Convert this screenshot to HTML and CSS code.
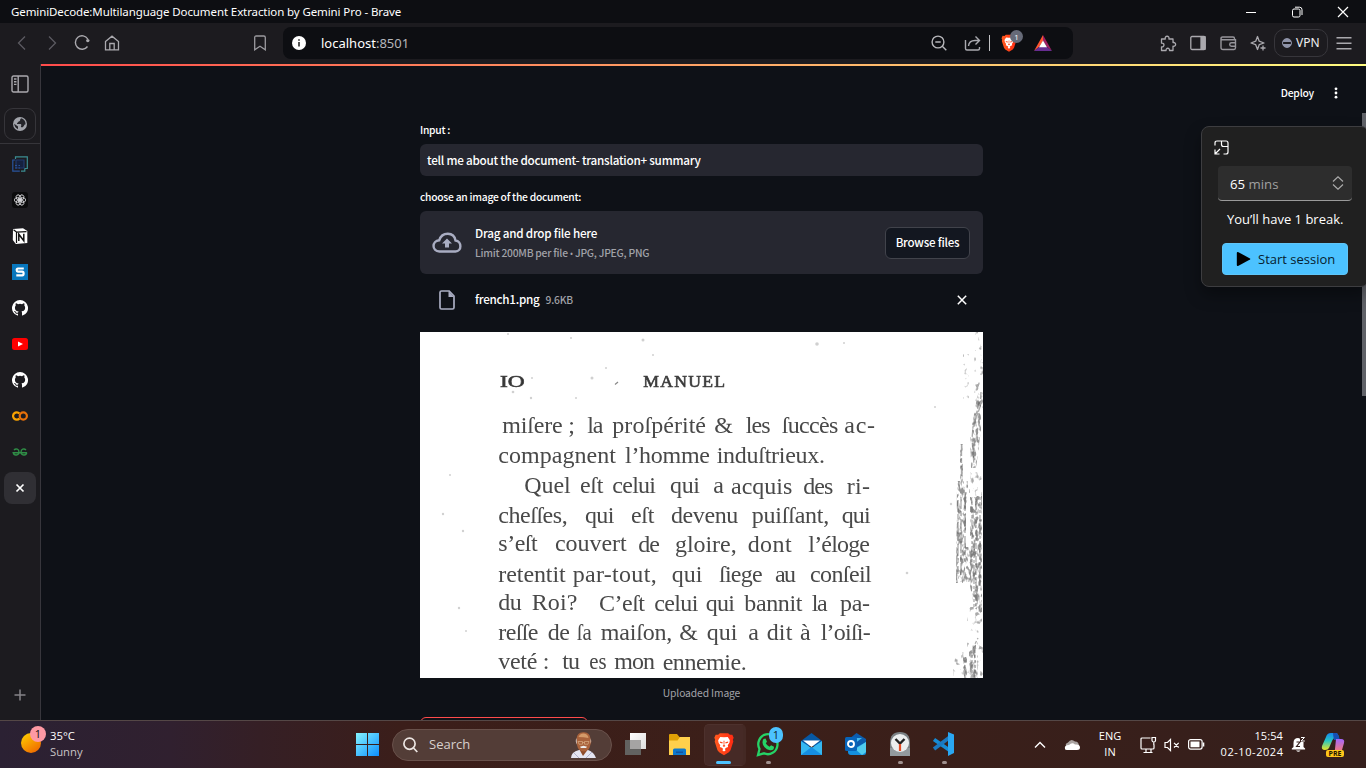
FILE: index.html
```html
<!DOCTYPE html>
<html lang="en">
<head>
<meta charset="utf-8">
<title>GeminiDecode:Multilanguage Document Extraction by Gemini Pro</title>
<link rel="stylesheet" href="styles.css">
</head>
<body>
<svg width="0" height="0" class="defs">
  <defs>
    <linearGradient id="brave" x1="0" x2="1"><stop offset="0" stop-color="#ff5a1f"/><stop offset="1" stop-color="#ff2a12"/></linearGradient>
    <symbol id="lion" viewBox="0 0 24 28">
      <path fill="url(#brave)" d="M7 1h10l2 2 3-.2 1.600 3.700-1 2.500.6 2-3.400 10.500-2 2.500L12 27.500 6.200 24l-2-2.500L.8 11l.6-2-1-2.500L2 2.800 5 3z"/>
      <path fill="#fff" d="M7.500 5.500L12 6l4.500-.5 2.500 4-.5 3-2 3 .5 2-2.500 1-1.500 1.500 1 1.500-2 1.500-2-1.500 1-1.500-1.500-1.500-2.500-1 .5-2-2-3-.5-3z"/>
      <path fill="#ff4a1c" d="M7 11l3.500 1-.5 1.300L7 12.500zM17 11l-3.500 1 .5 1.300 3-.8zM11.400 10h1.200l-.2 5 1.300 1.300L12 17.500l-1.700-1.200 1.300-1.300z"/>
    </symbol>
    <symbol id="github" viewBox="0 0 16 16"><path fill="#fff" d="M8 0a8 8 0 0 0-2.530 15.590c.4.070.55-.17.550-.38v-1.490c-2.010.37-2.530-.49-2.690-.94-.09-.23-.48-.94-.82-1.130-.28-.15-.68-.52-.01-.53.630-.01 1.080.58 1.230.82.720 1.210 1.870.87 2.330.66.070-.52.280-.87.510-1.070-1.780-.2-3.640-.89-3.640-3.950 0-.87.310-1.590.82-2.150-.08-.2-.36-1.020.08-2.120 0 0 .67-.21 2.200.82a7.600 7.600 0 0 1 4 0c1.530-1.040 2.200-.82 2.200-.82.440 1.100.160 1.920.080 2.120.510.560.820 1.270.820 2.150 0 3.070-1.870 3.750-3.650 3.950.290.250.540.730.540 1.480v2.200c0 .21.150.460.550.380A8 8 0 0 0 8 0z"/></symbol>
  </defs>
</svg>
<div class="desktop">
  <header class="titlebar">
    <span class="win-title">GeminiDecode:Multilanguage Document Extraction by Gemini Pro - Brave</span>
    <div class="win-controls">
      <svg width="12" height="12" viewBox="0 0 12 12"><path d="M1 6.500h10" stroke="#fff"/></svg>
      <svg width="12" height="12" viewBox="0 0 12 12" fill="none" stroke="#fff"><rect x="1.500" y="3" width="7.500" height="8" rx="1.500"/><path d="M4 1.200h4.500a2.500 2.500 0 0 1 2.500 2.500V9"/></svg>
      <svg width="12" height="12" viewBox="0 0 12 12"><path d="M1 1l10 10M11 1L1 11" stroke="#fff" stroke-width="1.200"/></svg>
    </div>
  </header>

  <nav class="toolbar">
    <div class="nav-icons">
      <svg width="16" height="16" fill="none" stroke="#5c5b61" stroke-width="1.300"><path d="M11 1.500L4.500 8l6.500 6.500"/></svg>
      <svg width="16" height="16" fill="none" stroke="#5c5b61" stroke-width="1.300"><path d="M5 1.500L11.500 8 5 14.500"/></svg>
      <svg width="16" height="16" fill="none" stroke="#aaa9ae" stroke-width="1.400"><path d="M13.500 11.500A6.700 6.700 0 1 1 13.800 4"/><circle cx="13.800" cy="5.600" r="1.700" fill="#aaa9ae" stroke="none"/></svg>
      <svg width="16" height="16" fill="none" stroke="#aaa9ae" stroke-width="1.300"><path d="M1.500 6.500L8 1.200l6.500 5.300v8.300h-13zM5.800 14.500V8.500h4.400v6"/></svg>
    </div>
    <svg class="bookmark" width="14" height="16" fill="none" stroke="#9b9a9f" stroke-width="1.300"><path d="M1.700 2.500q0-1.500 1.500-1.500h7.600q1.500 0 1.500 1.500v12.300L7 11.200l-5.300 3.600z"/></svg>
    <div class="address">
      <svg width="14" height="14" viewBox="0 0 14 14"><circle cx="7" cy="7" r="7" fill="#fff"/><path d="M7 6v4.500M7 3.200v1.600" stroke="#333" stroke-width="1.700"/></svg>
      <span class="url">localhost<span>:8501</span></span>
      <div class="addr-icons">
        <svg width="16" height="16" fill="none" stroke="#b7b7bb" stroke-width="1.400"><circle cx="7" cy="7" r="5.900"/><path d="M4.300 7h5.400M11.300 11.300l4 4"/></svg>
        <svg class="share" width="18" height="16" fill="none" stroke="#aaaab0" stroke-width="1.400"><path d="M1.500 5v8.500q0 1.500 1.500 1.500h11q1.500 0 1.500-1.500V12M4.500 11q.5-5.500 6.500-5.500h4M11.500 1.500l4 4-4 4"/></svg>
        <i class="sep"></i>
        <span class="shield"><svg width="16" height="18"><use href="#lion"/></svg><b>1</b></span>
        <svg class="bat" width="18" height="16" viewBox="0 0 18 16"><path fill="#ff5530" d="M9 0v6l-4 6-5 4z"/><path fill="#9e1f63" d="M9 0l9 16-5-4-4-6z"/><path fill="#662d91" d="M0 16l5-4h8l5 4z"/><path fill="#fff" d="M9 5.500l4 6.800H5z"/></svg>
      </div>
    </div>
    <div class="ext-icons">
      <svg width="17" height="17" fill="none" stroke="#aaa9ae" stroke-width="1.300" stroke-linejoin="round"><path d="M1.500 4h3.800c-1-3.700 4.600-3.700 3.600 0H13v3.600c3.500-.8 3.500 4.400 0 3.600V15.500H9.500c.6-3-4-3-3.400 0H1.500v-3.700c3.300.6 3.300-4.200 0-3.600z"/></svg>
      <svg width="16" height="16" fill="none" stroke="#aaa9ae" stroke-width="1.300"><rect x=".8" y="1.500" width="14.400" height="13" rx="1.200"/><path fill="#aaa9ae" d="M11 2h4v12h-4z"/></svg>
      <svg width="17" height="16" fill="none" stroke="#96959b" stroke-width="1.400"><path d="M14.500 4.500v-1Q14.500 2 13 2H2.500Q1 2 1 3.300T2.500 4.800h13v8q0 1.700-1.500 1.700H3q-2 0-2-2V3M15.500 7.700h-4q-1.800 0-1.800 1.700t1.800 1.800h4"/></svg>
      <svg width="17" height="17" fill="none" stroke="#aaa9ae" stroke-width="1.300" stroke-linejoin="round"><path d="M7.500 1.500l1.700 4.700L14 8l-4.800 1.700-1.700 4.800-1.800-4.800L1 8l4.700-1.800zM13 10.500v5M10.500 13h5"/></svg>
    </div>
    <div class="vpn"><i></i>VPN</div>
    <svg class="menu" width="16" height="14" stroke="#aaa9ae" stroke-width="1.400"><path d="M.5 1.800h15M.5 7.300h15M.5 12.800h15"/></svg>
  </nav>

  <div class="browser-body">
    <aside class="sidebar">
      <div class="cell first"><svg width="18" height="18" fill="none" stroke="#aaa9ae" stroke-width="1.400"><rect x="1" y="1" width="16" height="16" rx="1.500"/><path d="M7.200 1v16M3 4h2.500M3 6.700h2.500M3 9.400h2.500"/></svg></div>
      <div class="globe"><svg width="14" height="14" viewBox="0 0 14 14"><circle cx="7" cy="7" r="7" fill="#a2a4ab"/><path fill="#25252a" d="M8.500 1.200C6 2.200 8.500 3.700 5.600 4.500 5 5.700 3.800 5.800 4 7h3.700c1.500 1 0 2 .2 3 1.500 1 3-.6 3.500-2.300l1.200-.5C12.500 4 11.200 2.200 8.500 1.200zM1.200 6.800L5 9.400v2.800C3 11.300 1.300 9.500 1.200 6.800z"/></svg></div>
      <div class="side-list">
        <div class="cell"><svg width="16" height="16" fill="none" stroke-width="1.200"><path stroke="#3b8d92" d="M3.500 3V.8h11.800v11.700h-2.500v2.700H9"/><path stroke="#29549d" d="M3 4H.8v11.200h7"/><path fill="#15213f" stroke="#21396c" d="M4 4h8v8H4z"/><path stroke="#285299" stroke-dasharray="2 1.500" d="M3 9.500h5M3 12h5"/></svg></div>
        <div class="cell"><svg width="16" height="16"><rect width="16" height="16" rx="3" fill="#0b0b0c"/><g fill="none" stroke="#d9d9dc" stroke-width=".85"><ellipse cx="8" cy="5.600" rx="2.300" ry="3.300" transform="rotate(30 8 8)"/><ellipse cx="8" cy="5.600" rx="2.300" ry="3.300" transform="rotate(90 8 8)"/><ellipse cx="8" cy="5.600" rx="2.300" ry="3.300" transform="rotate(150 8 8)"/><ellipse cx="8" cy="5.600" rx="2.300" ry="3.300" transform="rotate(210 8 8)"/><ellipse cx="8" cy="5.600" rx="2.300" ry="3.300" transform="rotate(270 8 8)"/><ellipse cx="8" cy="5.600" rx="2.300" ry="3.300" transform="rotate(330 8 8)"/></g></svg></div>
        <div class="cell"><svg width="16" height="16"><path fill="#fff" d="M1 1l10-.8L15.300 3v12l-11.500.9L.8 12z"/><path fill="none" stroke="#111" stroke-width="1.200" d="M1.500 1.800l3 2.300v11M4.500 4.200l10-.6"/><path fill="none" stroke="#111" stroke-width="1.500" d="M6.800 13V6.200l5 6.600V5.800"/></svg></div>
        <div class="cell"><svg width="16" height="16"><path fill="#0877bd" d="M0 0h16v16H0z"/><path fill="none" stroke="#fff" stroke-width="2.200" d="M11.800 4.500H6Q4.700 4.500 4.700 6T6 7.700h4.200q1.400 0 1.400 1.800t-1.400 1.900H4.300"/></svg></div>
        <div class="cell"><svg width="16" height="16"><use href="#github"/></svg></div>
        <div class="cell"><svg width="16" height="12"><rect width="16" height="12" rx="2.500" fill="#f00"/><path fill="#fff" d="M6 3.500l5 2.500-5 2.500z"/></svg></div>
        <div class="cell"><svg width="16" height="16"><use href="#github"/></svg></div>
        <div class="cell"><svg width="16" height="10" fill="none" stroke-width="2.200"><path stroke="#f9a300" d="M7.500 2.500a3.700 3.700 0 1 0 0 5"/><circle cx="11.300" cy="5" r="3.600" stroke="#e8710a"/></svg></div>
        <div class="cell"><svg width="16" height="9" fill="none" stroke="#2f8d46" stroke-width="1.400"><path d="M2 2c2-2 5-.8 5 2.200s-5 4.300-5.800.5H15M14 2c-2-2-5-.8-5 2.200s5 4.300 5.800.5"/></svg></div>
        <div class="cell"><div class="close-tab"><svg width="10" height="10"><path d="M1.500 1.500l7 7M8.500 1.500l-7 7" stroke="#fff" stroke-width="1.700"/></svg></div></div>
      </div>
      <div class="cell add"><svg width="12" height="12"><path d="M6 .5v11M.5 6h11" stroke="#858489" stroke-width="1.500"/></svg></div>
    </aside>

    <main class="app">
      <div class="rainbow"></div>
      <div class="app-header"><span>Deploy</span><svg width="4" height="12" fill="#fff"><circle cx="2" cy="1.800" r="1.400"/><circle cx="2" cy="6" r="1.400"/><circle cx="2" cy="10.200" r="1.400"/></svg></div>
      <div class="content">
        <div class="label l1">Input :</div>
        <div class="input"><span>tell me about the document- translation+ summary</span></div>
        <div class="label l2">choose an image of the document:</div>
        <div class="dropzone">
          <svg width="30" height="22" viewBox="0 0 30 22"><path fill="none" stroke="#a9adc2" stroke-width="2.400" d="M7.500 19.500C-.5 19-.3 9 7.200 8.300 10-.5 22-.5 23.500 8.500c6.500.5 6.500 11 0 11z"/><path fill="#a9adc2" d="M15 6.500l5 5h-3v4h-4v-4h-3z"/></svg>
          <div class="drop-text"><div class="drop-title">Drag and drop file here</div><div class="drop-sub">Limit 200MB per file <span class="dot">•</span> JPG, JPEG, PNG</div></div>
          <div class="browse"><span>Browse files</span></div>
        </div>
        <div class="file-row">
          <svg width="16" height="20" viewBox="0 0 16 20"><path fill="none" stroke="#a9adc2" stroke-width="1.700" d="M2.500 1h7.700l4.800 5v11.500q0 1.500-1.500 1.500h-11Q1 19 1 17.500v-15Q1 1 2.500 1z"/><path fill="#a9adc2" d="M9.500 1v6H15z"/></svg>
          <span class="fname">french1.png</span><span class="fsize">9.6KB</span>
          <svg class="remove" width="10" height="10"><path d="M.8.8l8.400 8.400M9.200.8L.8 9.200" stroke="#fff" stroke-width="1.500"/></svg>
        </div>
        <svg class="scan" width="563" height="346" viewBox="0 0 563 346">
          <defs>
            <filter id="ink" x="0" y="0" width="563" height="346" filterUnits="userSpaceOnUse">
              <feTurbulence type="fractalNoise" baseFrequency=".34 .16" numOctaves="2" seed="5" result="n"/>
              <feColorMatrix in="n" values="0 0 0 0 .3  0 0 0 0 .3  0 0 0 0 .3  5 0 0 0 -2.200" result="m"/>
              <feComposite in="m" in2="SourceGraphic" operator="in"/>
              <feGaussianBlur stdDeviation=".45"/>
            </filter>
            <filter id="sparse" x="0" y="0" width="563" height="346" filterUnits="userSpaceOnUse">
              <feTurbulence type="fractalNoise" baseFrequency=".2 .16" numOctaves="2" seed="9" result="n"/>
              <feColorMatrix in="n" values="0 0 0 0 .4  0 0 0 0 .4  0 0 0 0 .4  6 0 0 0 -3.500" result="m"/>
              <feComposite in="m" in2="SourceGraphic" operator="in"/>
              <feGaussianBlur stdDeviation=".5"/>
            </filter>
            <filter id="soft"><feGaussianBlur stdDeviation="2.100"/></filter>
          </defs>
          <rect width="563" height="346" fill="#fff"/>
          <g class="print" transform="translate(60 0) scale(.33333)" filter="url(#soft)">
            <g class="head"><text x="60" y="165" textLength="74" lengthAdjust="spacingAndGlyphs">IO</text><text x="490" y="165" textLength="245">MANUEL</text></g>
            <text x="67" y="302" textLength="218">miſere ;</text><text x="322" y="302" textLength="48">la</text><text x="397" y="302" textLength="281">proſpérité</text><text x="703" y="302" textLength="59">&amp;</text><text x="797" y="302" textLength="75">les</text><text x="905" y="302" textLength="170">ſuccès</text><text x="1093" y="302" textLength="92">ac-</text>
            <text x="55" y="392" textLength="353">compagnent</text><text x="435" y="392" textLength="255">l’homme</text><text x="710" y="394" textLength="325">induſtrieux.</text>
            <text x="133" y="482" textLength="139">Quel</text><text x="300" y="482" textLength="70">eſt</text><text x="397" y="482" textLength="131">celui</text><text x="570" y="484" textLength="90">qui</text><text x="700" y="484" textLength="30">a</text><text x="753" y="485" textLength="184">acquis</text><text x="970" y="485" textLength="90">des</text><text x="1100" y="485" textLength="70">ri-</text>
            <text x="55" y="572" textLength="208">cheſſes,</text><text x="315" y="572" textLength="88">qui</text><text x="453" y="572" textLength="70">eſt</text><text x="573" y="572" textLength="202">devenu</text><text x="815" y="573" textLength="233">puiſſant,</text><text x="1085" y="573" textLength="87">qui</text>
            <text x="55" y="657" textLength="118">s’eſt</text><text x="225" y="658" textLength="215">couvert</text><text x="475" y="659" textLength="65">de</text><text x="585" y="659" textLength="185">gloire,</text><text x="803" y="659" textLength="132">dont</text><text x="985" y="659" textLength="185">l’éloge</text>
            <text x="55" y="750" textLength="202">retentit</text><text x="278" y="750" textLength="252">par-tout,</text><text x="575" y="750" textLength="92">qui</text><text x="717" y="750" textLength="131">ſiege</text><text x="885" y="750" textLength="63">au</text><text x="990" y="750" textLength="185">conſeil</text>
            <text x="55" y="835" textLength="70">du</text><text x="155" y="835" textLength="137">Roi?</text><text x="357" y="836" textLength="138">C’eſt</text><text x="523" y="836" textLength="132">celui</text><text x="677" y="836" textLength="88">qui</text><text x="793" y="837" textLength="174">bannit</text><text x="995" y="837" textLength="48">la</text><text x="1080" y="837" textLength="90">pa-</text>
            <text x="55" y="923" textLength="120">reſſe</text><text x="203" y="923" textLength="67">de</text><text x="290" y="923" textLength="45" lengthAdjust="spacingAndGlyphs">ſa</text><text x="362" y="924" textLength="215">maiſon,</text><text x="598" y="924" textLength="57">&amp;</text><text x="680" y="925" textLength="92">qui</text><text x="805" y="925" textLength="30">a</text><text x="860" y="925" textLength="77">dit</text><text x="960" y="925" textLength="30">à</text><text x="1022" y="925" textLength="150">l’oiſi-</text>
            <text x="55" y="1011" textLength="153">veté :</text><text x="247" y="1012" textLength="53">tu</text><text x="328" y="1012" textLength="52" lengthAdjust="spacingAndGlyphs">es</text><text x="403" y="1012" textLength="122">mon</text><text x="548" y="1013" textLength="252">ennemie.</text>
          </g>
          <g fill="#999" opacity=".45"><circle cx="223" cy="8" r="1.500"/><circle cx="397" cy="12" r="1.800"/><circle cx="88" cy="2" r="1"/><circle cx="151" cy="6" r="1"/><circle cx="233" cy="23" r="1"/><circle cx="172" cy="46" r="1.500"/><circle cx="186" cy="36" r="1"/><circle cx="112" cy="46" r="1"/><circle cx="111" cy="66" r="1.200"/><circle cx="156" cy="66" r="1"/><circle cx="93" cy="60" r="1.300"/><circle cx="30" cy="143" r="1"/><circle cx="23" cy="182" r="1.200"/><circle cx="43" cy="199" r="1.200"/><circle cx="39" cy="276" r="1.200"/><circle cx="46" cy="299" r="1"/><circle cx="487" cy="241" r="1.300"/><circle cx="515" cy="75" r="1"/><circle cx="531" cy="172" r="1.200"/><circle cx="424" cy="11" r="1"/></g>
          <path d="M195 52.500l3-2.500" stroke="#888" stroke-width="1.200"/>
          <g filter="url(#ink)">
            <path d="M558 60h3v38l-5 38h-5l-1-32z"/>
            <path d="M540 112h3v37h-3zM537 149h11v22h-9v80h-3zM539 165h7v86h-7zM550 165h12v115l-6 4-6-30zM556 164h6v110h-6zM545 215h5v35h-5z"/>
            <path d="M549 320l9-10v36h-8zM543 325h4v21h-4z"/>
          </g>
          <g fill="none" stroke="#555" opacity=".5" stroke-width="1.300">
            <path stroke-dasharray="7 2 3 1" d="M561 60l-1 15-7 20-1 12 2 26M559 70l-5 25"/>
            <path stroke-dasharray="12 2 5 3" d="M541.500 112v32M541 165v80M545 160v70M538 168v74"/>
            <path stroke-dasharray="3 2 6 2" d="M552 170v60M556 167v110M560 165v90M554 215v60"/>
            <path stroke-dasharray="3 2" d="M552 346v-28l6-12M545 346v-18M555 346v-30"/>
          </g>
          <path filter="url(#sparse)" d="M555 0h8v90h-10zM543 22h6v50h-6zM549 140h13v25h-13zM547 275h15v40h-15zM533 320h20v26h-20zM555 295h8v51h-8z"/>
        </svg>
        <div class="caption"><span>Uploaded Image</span></div>
        <div class="submit"></div>
      </div>
      <div class="scroll-thumb"></div>
    </main>
  </div>

  <footer class="taskbar">
    <div class="weather">
      <div class="sun"><b>1</b></div>
      <div class="w-text"><div>35°C</div><div>Sunny</div></div>
    </div>
    <svg class="start" width="24" height="24" viewBox="0 0 24 24"><defs><linearGradient id="w" x2="1" y2="1"><stop stop-color="#85f4ff"/><stop offset="1" stop-color="#0c8eff"/></linearGradient></defs><path fill="url(#w)" d="M1 0h11v11H1zM13 0h11v11H13zM1 12h11v11H1zM13 12h11v11H13z"/></svg>
    <div class="search">
      <svg width="15" height="16" fill="none" stroke="#ece5e2" stroke-width="1.700"><circle cx="6.500" cy="6.700" r="5.600"/><path d="M10.500 11l3.800 4"/></svg>
      <span>Search</span>
      <svg class="portrait" width="28" height="26" viewBox="0 0 28 26"><path fill="#e4e5f1" d="M1 26q0-6 8-8h9q6 2 8 8z"/><path fill="#8d4c2a" d="M8 15l5 9 6-8z"/><path fill="#a9623b" d="M6.500 7Q7 0 13.500.3 20 0 20.500 7l.8 3-1 3q-1 6-6.500 6.500Q8 19 7 13l-1-3z"/><path fill="#d49a69" d="M8.500 5Q10 1 14 1.500q4 .5 4.500 4.500-5-1-10-1z"/><path fill="none" stroke="#e0b88f" stroke-width=".6" d="M8 9.500h4.500v2.700H9zM14.500 9.500H19L18 12.200h-3.500zM12.500 10.500h2"/><path fill="#eee" d="M10 14.800l3.500-1 3.500 1-1 1.100h-5z"/><path fill="#d5cbc7" d="M6.500 6Q4.800 9 7 12.500zM20.500 6q1.500 3 0 6z"/><path stroke="#afb1cc" d="M4 21l5 5M22 20l-6 6" fill="none"/></svg>
    </div>
    <div class="apps">
      <div><svg width="24" height="24"><defs><linearGradient id="tv" x2="1" y2="1"><stop stop-color="#fff"/><stop offset="1" stop-color="#ddd"/></linearGradient></defs><path fill="#626260" d="M1 8h16v15H1z"/><path fill="url(#tv)" d="M6 1h16v16H6z"/><path fill="#a5a4a3" d="M6 8h11v9H6z"/></svg></div>
      <div><svg width="24" height="24"><path fill="#dfa006" d="M1 3q0-1 1-1h7l2.500 3H20v6H1z"/><path fill="#ffd04c" d="M1 8.500h8.500L12 5h10v18H1z"/><path fill="#0d78cc" d="M5 23v-5q0-1.500 1.500-1.500h10Q18 16.500 18 18v5z"/><path fill="#1252a0" d="M8 19.500h7V21H8z"/></svg></div>
      <div class="active"><svg width="20" height="24"><use href="#lion"/></svg><i class="run on"></i></div>
      <div class="wa"><svg width="24" height="26" fill="none" stroke="#25d366"><path stroke-width="2.300" d="M2 24l1.500-6A9.600 10 0 1 1 8 22.300z"/><path fill="#25d366" stroke="none" d="M7.500 8l2-.5 1.500 3.200-1.200 1.600q1.200 2.500 3.700 3.500l1.600-1.600 2.900 1.600q.2 4-4 3.500Q7 17.500 6.500 11.500q0-2.500 1-3.500z"/></svg><b>1</b><i class="run"></i></div>
      <div><svg width="24" height="24"><path fill="#0758a4" d="M1 9L11.500 1 22 9v5H1z"/><path fill="#35b8f1" d="M1 9l10.500 7L22 9v14H1z"/><path fill="#168ee2" d="M22 23H1l10.500-8z"/><path fill="#fff" d="M3 8.500h17L11.500 15z"/></svg></div>
      <div><svg width="24" height="26"><path fill="#0b5cad" d="M5 8l7.500-6L22 8v10H5z"/><path fill="#42b9ee" d="M10 7h8l-8 6z"/><path fill="#1490df" d="M4 12l7 5 11-6v11q0 2-2 2H7q-3 0-3-3z"/><path fill="#50ccef" d="M11 18l11-7v10l-4 3z"/><rect y="6" x="1" width="12" height="14" rx="1.500" fill="#0764ba"/><circle cx="7" cy="13" r="3" fill="none" stroke="#fff" stroke-width="1.900"/></svg></div>
      <div><svg width="24" height="26"><path fill="#7a8084" d="M2 24V12Q2 1 12 1t10 11v12z"/><path fill="#939a9e" d="M2 17h20v8H2z"/><circle cx="12" cy="12" r="9" fill="#eceeef"/><path d="M7.500 8l4.500 4.500L16.500 8" fill="none" stroke="#222" stroke-width="2.400"/><path d="M12 13v7" stroke="#e34d26" stroke-width="2.200"/></svg><i class="run"></i></div>
      <div><svg width="24" height="26"><path fill="none" stroke="#168bd5" stroke-width="3.800" d="M18 19.500L2 8.500"/><path fill="none" stroke="#1b79c1" stroke-width="3.800" d="M18 6L2 18"/><path fill="#2aa7f2" d="M16 1l6 2.500v18.500L16 25z"/></svg><i class="run"></i></div>
    </div>
    <div class="tray">
      <svg class="chev" width="12" height="8" fill="none" stroke="#fff" stroke-width="1.400"><path d="M1 6.500l5-5 5 5"/></svg>
      <svg class="cloud" width="17" height="12"><path fill="#aaa3a1" d="M3 8Q0 5 4 3.500 7-1 11 2.500q4 0 4 5z"/><path fill="#fff" d="M1 10Q0 6 5 6q3-3 6-.5 5-.5 5 3 0 2.500-3 2.500H3q-2 0-2-1z"/></svg>
      <div class="lang">ENG<br>IN</div>
      <svg class="net" width="17" height="18" fill="none" stroke="#fff" stroke-width="1.200"><path d="M10.500 2H2Q1 2 1 3v9q0 1 1 1h11q1 0 1-1V8.500M6 13v3M11 13v3M3.500 16.500h9M12 1.500h3.500v3q0 1.500-1.700 1.500T12 4.500zM13.800 6v3"/></svg>
      <svg class="mute" width="17" height="14" fill="none" stroke="#fff" stroke-width="1.200"><path d="M1 4.500h2.500L6.500 1.500v11L3.500 9.500H1zM10 4.800l4.700 4.700M14.700 4.800L10 9.500"/></svg>
      <svg class="batt" width="17" height="11"><rect x=".6" y=".6" width="13.500" height="9.500" rx="2" fill="none" stroke="#fff" stroke-width="1.200"/><path fill="#fff" d="M2.500 2.500h9v5.700h-9zM14.800 3.500h1.500v4h-1.500z"/></svg>
      <div class="clock">15:54<br><span>02-10-2024</span></div>
      <svg class="bell" width="15" height="17"><path fill="#fff" d="M2.500 11V7q0-5 4.700-5l5.300 2v7l1.600 1.500v1H.8v-1zM5 14.500h4.500q-2 2.500-4.500 0z"/><path fill="none" stroke="#321e1c" stroke-width="1.100" d="M5.500 6H9l-3.500 4.500H9"/><path fill="#351f1c" d="M9 0h6v6H9z"/><path fill="none" stroke="#fff" d="M10 1.500h3.500L10 5h3.800"/></svg>
      <div class="copilot"><svg width="25" height="24" viewBox="0 0 25 24"><defs><linearGradient id="c1" x2="0" y2="1"><stop stop-color="#1687ed"/><stop offset=".45" stop-color="#25c4c5"/><stop offset="1" stop-color="#e9e325"/></linearGradient><linearGradient id="c2" x2="0" y2="1"><stop stop-color="#a466ff"/><stop offset="1" stop-color="#ff7d67"/></linearGradient></defs><path fill="url(#c1)" d="M5 4q1-4 5-4h5q2 0 3 5h-4q-2 0-3 3l-3 7q-1 2-4 2-4 0-3-4z"/><path fill="#164fb4" d="M12 0h3q2 0 3 4l1 3h-6q-1-5-1-7z"/><path fill="url(#c2)" d="M15 6h5q4 0 3 4l-2 7q-1 3-5 3h-5q3-1 3-4z"/></svg><b>PRE</b></div>
    </div>
  </footer>

  <div class="focus">
    <svg class="expand" width="15" height="15" fill="none" stroke="#fff" stroke-width="1.200"><path d="M1 5.500V3q0-2 2-2h9q2 0 2 2v9q0 2-2 2H9.500M7.500 1v3.500q0 2 2 2H14M1 9.500V14h4.500M1.500 13.500L6 9"/></svg>
    <div class="mins"><span>65 <em>mins</em></span><svg width="12" height="14" fill="none" stroke="#aaa" stroke-width="1.200"><path d="M1 5.500L6 .8l5 4.700M1 8.500l5 4.700 5-4.700"/></svg></div>
    <div class="break">You’ll have 1 break.</div>
    <div class="session"><svg width="15" height="16"><path fill="#000" d="M.8 2Q.8.500 2.500 1.200L14 7.500q.6.500 0 1L2.500 14.800Q.8 15.500.8 14z"/></svg><span>Start session</span></div>
  </div>
</div>
</body>
</html>
```
FILE: styles.css
```css
* { box-sizing: border-box; }
body { margin: 0; background: #0e1117; font-family: "Open Sans", "Noto Sans", sans-serif; color: #fff; overflow: hidden; }
svg { display: block; flex: none; }
.defs { position: absolute; }
i, em { font-style: normal; }
.desktop { position: relative; width: 1366px; height: 768px; display: flex; flex-direction: column; overflow: hidden; }

.titlebar { height: 23px; background: #0d0e12; display: flex; justify-content: space-between; align-items: center; padding: 0 17px 0 11px; flex: none; }
.win-title { font: 11.5px/22px "Noto Sans", sans-serif; letter-spacing: -.1px; white-space: nowrap; }
.win-controls { display: flex; gap: 34px; }

.toolbar { height: 41px; padding-bottom: 1px; background: #1c1b1f; display: flex; align-items: center; flex: none; }
.nav-icons { display: grid; grid-template-columns: repeat(4, 30px); justify-items: center; margin-left: 7px; }
.bookmark { margin: 0 16px 0 126px; }
.address { width: 790px; height: 32px; border-radius: 8px; background: #0d0e12; display: flex; align-items: center; padding-left: 9px; }
.url { margin-left: 15px; font: 13px/20px "Noto Sans", sans-serif; letter-spacing: 0; }
.url span { color: #b6b6bb; }
.addr-icons { margin-left: auto; display: flex; align-items: center; }
.share { margin-left: 17px; }
.sep { width: 1px; height: 16px; background: #c2c2c5; margin-left: 7px; }
.shield { position: relative; width: 22px; margin-left: 11px; }
.shield b { position: absolute; left: 9px; top: -4px; width: 13px; height: 13px; border-radius: 7px; background: #666a78; font: 8px/13px "Open Sans", sans-serif; text-align: center; }
.bat { margin: 0 21px 0 11px; }
.ext-icons { display: grid; grid-template-columns: repeat(4, 30px); justify-items: center; align-items: center; margin-left: 80px; }
.vpn { margin-left: 1px; width: 54px; height: 28px; border: 1px solid #37363b; border-radius: 10px; display: flex; align-items: center; font: 12px/20px "Noto Sans", sans-serif; padding: 0 0 1px 7px; gap: 4px; color: #efeff1; }
.vpn i { width: 10px; height: 10px; border-radius: 5px; background: linear-gradient(#8e93a8 3px, #1c1b1f 3px, #1c1b1f 5px, #8e93a8 5px); border: 1px solid #8e93a8; margin-top: 1px; }
.menu { margin-left: 8px; }

.browser-body { flex: 1; display: flex; min-height: 0; }
.sidebar { width: 41px; background: #1c1b1f; border-right: 1px solid #37363c; display: flex; flex-direction: column; flex: none; }
.cell { height: 36px; display: flex; align-items: center; justify-content: center; }
.cell.first { height: 40px; }
.globe { width: 32px; height: 32px; margin: 4px 4px 3px; border: 1px solid #36353a; border-radius: 9px; display: flex; align-items: center; justify-content: center; }
.side-list { border-top: 1px solid #36353a; padding-top: 2px; }
.close-tab { width: 32px; height: 32px; border-radius: 8px; background: #302f34; display: flex; align-items: center; justify-content: center; }
.add { margin-top: auto; height: 50px; }

.app { flex: 1; position: relative; background: #0e1117; display: flex; flex-direction: column; overflow: hidden; font-family: "Noto Sans CJK SC", "Noto Sans CJK JP", sans-serif; }
.rainbow { height: 2px; background: linear-gradient(90deg, #ff4b4b, #fffd80); flex: none; }
.app-header { height: 54px; flex: none; display: flex; justify-content: flex-end; align-items: center; gap: 20px; padding-right: 28px; font-size: 10.3px; font-weight: 500; }
.app-header span { letter-spacing: -.2px; margin-top: -2px; }
.content { width: 563px; margin-left: 379px; }
.label { font-size: 10.3px; font-weight: 500; line-height: 16px; white-space: nowrap; letter-spacing: -.25px; }
.l1 { margin-top: 2px; }
.l2 { margin-top: 13px; }
.input { margin-top: 6px; height: 32px; border-radius: 6px; background: #262730; padding-left: 7px; font-size: 11.7px; line-height: 31px; font-weight: 500; white-space: nowrap; letter-spacing: -.24px; }
.dropzone { margin-top: 6px; height: 63px; border-radius: 6px; background: #262730; display: flex; align-items: center; padding: 0 13px 0 12px; }
.drop-text { margin-left: 13px; font-weight: 500; white-space: nowrap; }
.drop-title { font-size: 11.7px; line-height: 19px; letter-spacing: -.22px; }
.drop-sub { font-size: 10.3px; line-height: 19px; letter-spacing: -.23px; color: #a1a2a8; padding-top: 1px; margin-bottom: -1px; }
.dot { font-family: "Noto Sans", sans-serif; font-size: 8px; letter-spacing: 0; }
.browse { margin-left: auto; width: 85px; height: 32px; border: 1px solid #41434b; border-radius: 6px; background: #131720; text-align: center; font-size: 11.6px; line-height: 29px; font-weight: 500; white-space: nowrap; letter-spacing: -.25px; }
.file-row { height: 52px; margin-top: 0; margin-bottom: 6px; display: flex; align-items: center; padding: 0 16px 0 19px; font-weight: 500; }
.fname { margin: -3px 0 0 20px; font-size: 11.7px; line-height: 20px; letter-spacing: -.27px; }
.fsize { margin: -2px 0 0 6px; font-size: 10.3px; letter-spacing: -.2px; color: #a1a2a8; }
.remove { margin-left: auto; }
.print text { font-family: "Liberation Serif", serif; font-size: 72px; fill: #484848; }
.print .head text { font-size: 53px; fill: #333; stroke: #444; stroke-width: 2px; }
.caption { height: 31px; text-align: center; font-size: 10.3px; line-height: 30px; letter-spacing: -.12px; color: #a1a2a8; }
.submit { margin-top: 8px; width: 168px; height: 32px; border: 1px solid #ff4b4b; border-radius: 6px; }
.scroll-thumb { position: absolute; right: 0; top: 49px; width: 4px; height: 283px; background: #606268; }

.taskbar { height: 48px; flex: none; display: flex; align-items: center; border-top: 1px solid #544746; background: linear-gradient(90deg, #2b2133 0, #30202f 170px, #351f25 260px, #3b1e1a 400px, #3c1f19 750px, #351f1c 1366px); position: relative; }
.weather { width: 355px; display: flex; align-items: center; padding-left: 21px; }
.sun { position: relative; width: 20px; height: 20px; border-radius: 50%; background: linear-gradient(145deg, #ffd400, #ed5c00); margin-top: -3px; }
.sun b { position: absolute; left: 9px; top: -7px; width: 16px; height: 16px; border-radius: 8px; background: #ff99a4; color: #111; font: 11px/16px "Open Sans", sans-serif; text-align: center; }
.w-text { margin: -2px 0 0 9px; font-size: 11.3px; line-height: 16px; letter-spacing: 0; }
.w-text div + div { color: #c9c3c5; }
.search { margin-left: 13px; width: 220px; height: 32px; border-radius: 16px; border: 1px solid #69514b; background: #533d37; display: flex; align-items: center; padding-left: 10px; font-size: 13px; color: #d8d0cd; }
.search span { margin: -2px 0 0 11px; }
.portrait { margin: 0 13px 0 auto; }
.apps { margin-left: 2px; display: grid; grid-template-columns: repeat(8, 44px); height: 47px; }
.apps > div { position: relative; display: flex; align-items: center; justify-content: center; padding-bottom: 1px; }
.apps > .active::before { content: ""; position: absolute; left: 2px; top: 3px; width: 38px; height: 40px; border-radius: 5px; background: #462a26; border: 1px solid #4d312d; border-right-width: 3px; border-right-color: #442924; }
.apps > .active svg { position: relative; }
.run { position: absolute; bottom: 4px; left: 20px; width: 5px; height: 3px; border-radius: 2px; background: #a0918e; }
.run.on { left: 14px; width: 15px; background: #4cc2ff; }
.wa b { position: absolute; left: 23px; top: 6px; width: 14px; height: 16px; border-radius: 8px; background: #4cc2ff; color: #10222c; font: 11px/16px "Open Sans", sans-serif; text-align: center; }
.tray { display: flex; align-items: center; margin-left: 68px; font-size: 11px; line-height: 16px; }
.cloud { margin-left: 18px; }
.lang { width: 30px; margin: -2px 0 0 14px; text-align: center; }
.net { margin-left: 15px; }
.mute { margin-left: 7px; }
.batt { margin-left: 7px; }
.clock { width: 75px; margin: -2px 0 0 3px; text-align: right; white-space: nowrap; letter-spacing: .1px; }
.clock span { letter-spacing: .55px; margin-right: -.5px; }
.bell { margin-left: 8px; }
.copilot { position: relative; margin-left: 15px; }
.copilot b { position: absolute; left: 5px; bottom: 0; width: 18px; height: 7px; border-radius: 2px; background: #ffc61a; color: #1b1400; font: 700 7px/7px "Open Sans", sans-serif; text-align: center; }

.focus { position: absolute; left: 1201px; top: 126px; width: 168px; height: 161px; border: 1px solid #3d3d40; border-radius: 8px; background: #202020; box-shadow: 0 8px 16px rgba(0,0,0,.35); }
.expand { margin: 13px 0 0 12px; }
.mins { margin: 11px 0 0 16px; width: 134px; height: 35px; border-radius: 4px; background: #2d2d2d; border-bottom: 1px solid #9a9a9a; display: flex; align-items: center; justify-content: space-between; padding: 0 8px 0 12px; font-size: 13.2px; }
.mins span { padding-top: 1px; }
.mins em { color: #a0a0a0; }
.break { margin-top: 9px; padding-left: 25px; font-size: 13px; line-height: 18px; white-space: nowrap; }
.session { margin: 15px 0 0 20px; width: 126px; height: 32px; border-radius: 4px; border: 1px solid #5fc5f7; background: #4cc2ff; color: #06202e; display: flex; align-items: center; padding-left: 13px; font-size: 13px; white-space: nowrap; }
.session span { margin-left: 7px; }
```
